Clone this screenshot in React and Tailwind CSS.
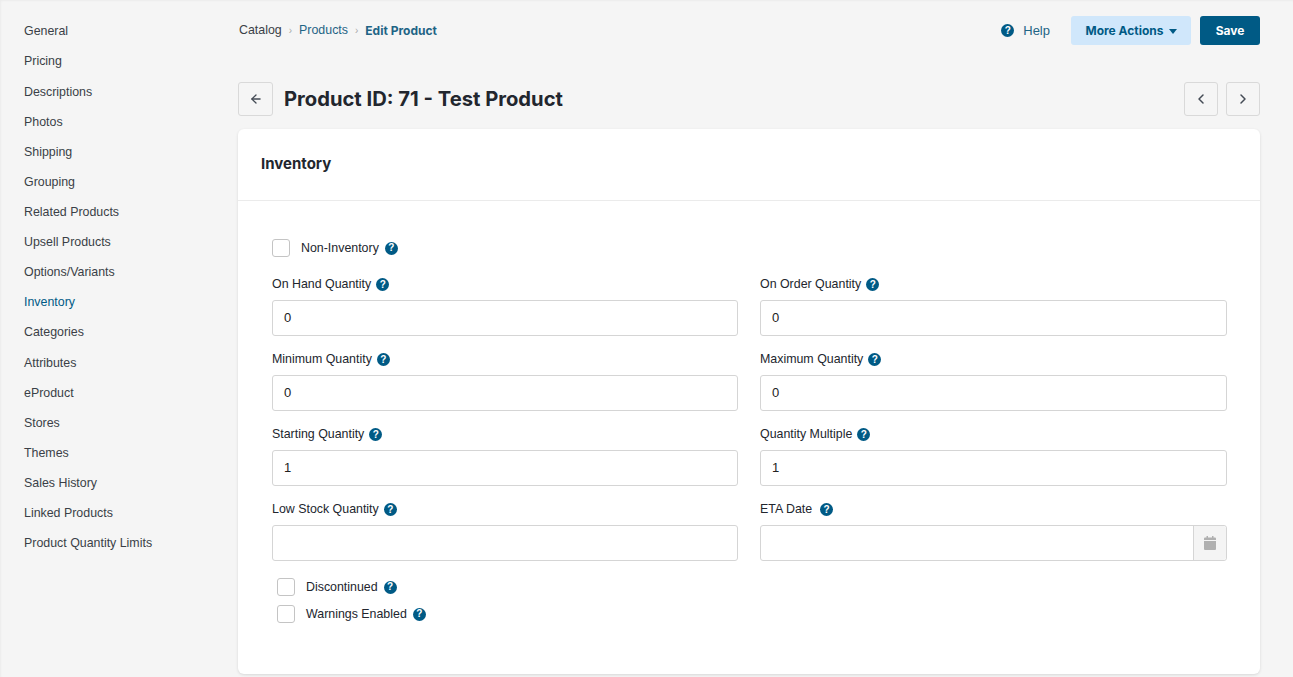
import React from 'react';
import { ArrowLeft, ChevronLeft, ChevronRight } from 'lucide-react';

const sideItems = [
    'General', 'Pricing', 'Descriptions', 'Photos', 'Shipping', 'Grouping', 'Related Products', 'Upsell Products',
    'Options/Variants', 'Inventory', 'Categories', 'Attributes', 'eProduct', 'Stores', 'Themes', 'Sales History',
    'Linked Products', 'Product Quantity Limits',
];

const rows = [
    [{ label: 'On Hand Quantity', value: '0' }, { label: 'On Order Quantity', value: '0' }],
    [{ label: 'Minimum Quantity', value: '0' }, { label: 'Maximum Quantity', value: '0' }],
    [{ label: 'Starting Quantity', value: '1' }, { label: 'Quantity Multiple', value: '1' }],
    [{ label: 'Low Stock Quantity', value: '' }, { label: 'ETA Date', value: '', date: true }],
];

const Hint = ({ className = '' }) => (
    <span className={`flex h-[13px] w-[13px] shrink-0 items-center justify-center rounded-full bg-[#005a85] text-[10px] font-bold leading-none text-white ${className}`}>
        ?
    </span>
);

const Check = ({ label, className = '' }) => (
    <div className={`flex h-[18px] items-center ${className}`}>
        <span className="h-[18px] w-[18px] shrink-0 rounded-[3px] border border-[#c4c4c4] bg-white" />
        <span className="ml-[11px] leading-[18px] text-[#22262e]">{label}</span>
        <Hint className="ml-[6px]" />
    </div>
);

const Field = ({ label, value, date }) => (
    <div className="flex min-w-0 flex-col">
        <div className="flex h-[25px] items-start pt-[2px]">
            <span className="leading-[15px] text-[#22262e]">{label}</span>
            <Hint className={date ? 'ml-[8px] mt-[1px]' : 'ml-[5px] mt-[1px]'} />
        </div>
        <div className="flex h-[36px] rounded-[3px] border border-[#d5d5d5] bg-white">
            <span className="flex-1 px-[11px] text-[13px] leading-[33px] text-[#222]">{value}</span>
            {date && (
                <span className="flex w-[33px] items-center justify-center rounded-r-[3px] border-l border-[#d5d5d5] bg-[#f4f4f4]">
                    <svg width="12" height="14" viewBox="0 0 12 14" fill="#b0b0b0">
                        <rect x="2.5" y="0" width="1.5" height="2" />
                        <rect x="8" y="0" width="1.5" height="2" />
                        <path d="M0 2.5a1 1 0 0 1 1-1h10a1 1 0 0 1 1 1V4H0zM0 5h12v8a1 1 0 0 1-1 1H1a1 1 0 0 1-1-1z" />
                    </svg>
                </span>
            )}
        </div>
    </div>
);

const SquareBtn = ({ children, className = '' }) => (
    <button className={`flex h-[34px] items-center justify-center rounded-[3px] border border-[#d9d9d9] bg-[#f5f5f5] text-[#444b55] ${className}`}>
        {children}
    </button>
);

const heading = 'font-["Inter",sans-serif]';

export default function App() {
    return (
        <div className='flex h-[677px] overflow-hidden bg-[#f5f5f5] font-["Liberation_Sans",sans-serif] text-[12.4px] shadow-[inset_1px_1px_2px_rgba(0,0,0,0.04)]'>
            {/* Sidebar */}
            <nav className="w-[238px] shrink-0 pl-6 pt-[16.75px]">
                {sideItems.map((item) => (
                    <div key={item} className={`flex h-[30.11px] items-center leading-[19px] ${item === 'Inventory' ? 'text-[#005a85]' : 'text-[#3a3f47]'}`}>
                        {item}
                    </div>
                ))}
            </nav>

            <main className="w-[1022px] shrink-0">
                {/* Top bar */}
                <div className="flex h-[82px] items-start justify-between pt-4">
                    <div className="flex h-[29px] items-center pl-px">
                        <span className="text-[#3a3f47]">Catalog</span>
                        <span className="mx-[7px] text-[10px] text-[#aaa]">›</span>
                        <span className="text-[#1f6485]">Products</span>
                        <span className="mx-[7px] text-[10px] text-[#aaa]">›</span>
                        <span className={`${heading} text-[12px] font-bold text-[#1f6485]`}>Edit Product</span>
                    </div>
                    <div className="flex items-center">
                        <Hint className="mr-[9px]" />
                        <span className="mr-[21px] text-[13px] text-[#1f6485]">Help</span>
                        <button className={`${heading} flex h-[29px] w-[120px] items-center justify-center gap-[5px] rounded-[3px] bg-[#d0e7fb] pt-px text-[12px] font-bold text-[#005a85]`}>
                            More Actions
                            <span className="h-0 w-0 border-x-[4.5px] border-t-[5px] border-x-transparent border-t-[#005a85]" />
                        </button>
                        <button className={`${heading} ml-[9px] h-[29px] w-[60px] rounded-[3px] bg-[#005a85] pt-px text-[12px] font-bold text-white`}>
                            Save
                        </button>
                    </div>
                </div>

                {/* Title row */}
                <div className="flex h-[47px] items-start justify-between">
                    <div className="flex items-center">
                        <SquareBtn className="w-[35px]"><ArrowLeft size={14} strokeWidth={2.25} /></SquareBtn>
                        <h1 className={`${heading} ml-[11px] text-[20.2px] font-bold text-[#22262e]`}>Product ID: 71 - Test Product</h1>
                    </div>
                    <div className="flex gap-2">
                        <SquareBtn className="w-[34px]"><ChevronLeft size={16} strokeWidth={2.25} /></SquareBtn>
                        <SquareBtn className="w-[34px]"><ChevronRight size={16} strokeWidth={2.25} /></SquareBtn>
                    </div>
                </div>

                {/* Card */}
                <section className="h-[545px] rounded-[6px] bg-white shadow-[0_1px_3px_rgba(0,0,0,0.12)]">
                    <div className="flex h-[72px] items-center border-b border-[#ebebeb] pl-[23px]">
                        <h2 className={`${heading} text-[15px] font-bold text-[#22262e]`}>Inventory</h2>
                    </div>
                    <div className="pl-[34px] pr-[33px] pt-[38px]">
                        <Check label="Non-Inventory" className="mb-[18px]" />
                        <div className="grid grid-cols-[466px_467px] gap-x-[22px] gap-y-[14px]">
                            {rows.flat().map((f) => (
                                <Field key={f.label} {...f} />
                            ))}
                        </div>
                        <div className="ml-[5px] mt-[17px] flex flex-col gap-[9px]">
                            <Check label="Discontinued" />
                            <Check label="Warnings Enabled" />
                        </div>
                    </div>
                </section>
            </main>
        </div>
    );
}
